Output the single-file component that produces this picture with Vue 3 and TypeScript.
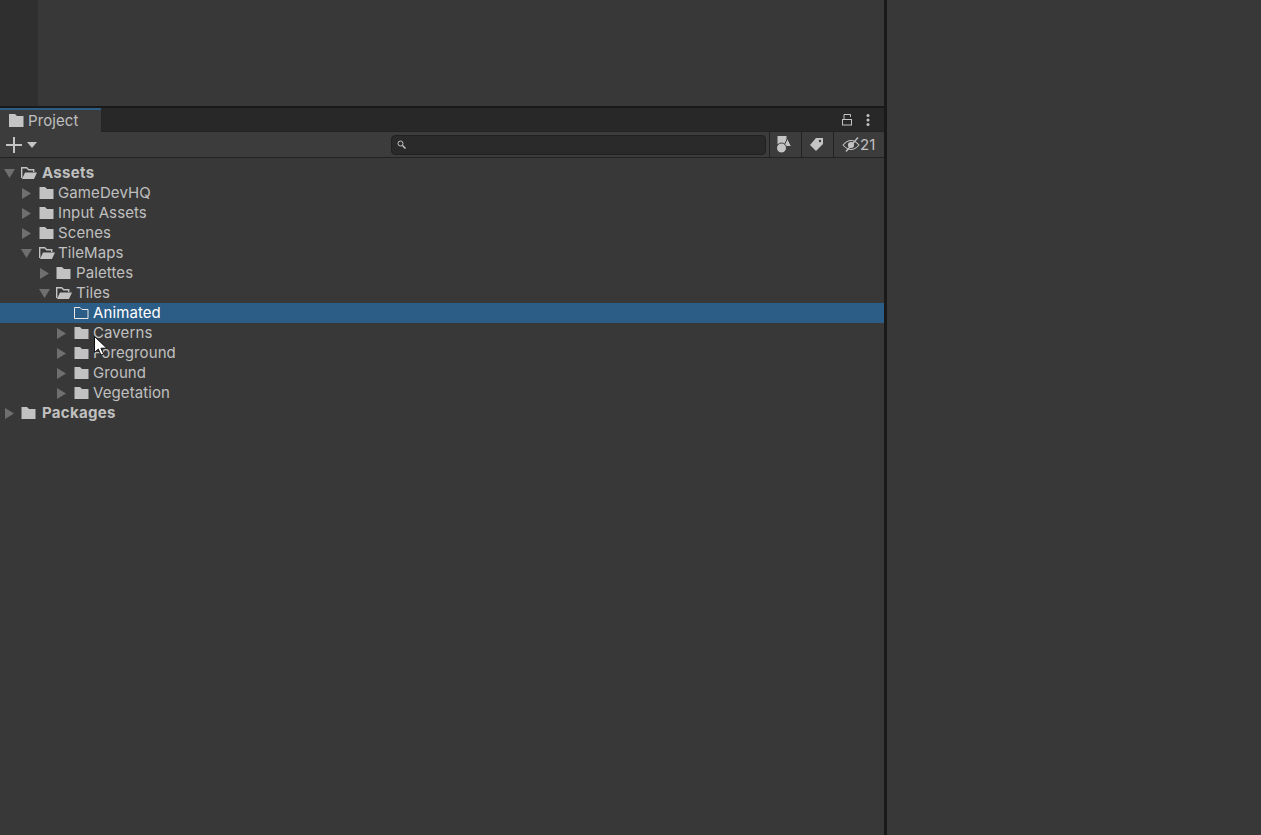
<script setup lang="ts">
interface Row { label: string; level: number; arrow: 'none' | 'open' | 'closed'; folder: 'open' | 'closed' | 'outline'; bold?: boolean; selected?: boolean }
const rows: Row[] = [
  { label: 'Assets', level: 0, arrow: 'open', folder: 'open', bold: true },
  { label: 'GameDevHQ', level: 1, arrow: 'closed', folder: 'closed' },
  { label: 'Input Assets', level: 1, arrow: 'closed', folder: 'closed' },
  { label: 'Scenes', level: 1, arrow: 'closed', folder: 'closed' },
  { label: 'TileMaps', level: 1, arrow: 'open', folder: 'open' },
  { label: 'Palettes', level: 2, arrow: 'closed', folder: 'closed' },
  { label: 'Tiles', level: 2, arrow: 'open', folder: 'open' },
  { label: 'Animated', level: 3, arrow: 'none', folder: 'outline', selected: true },
  { label: 'Caverns', level: 3, arrow: 'closed', folder: 'closed' },
  { label: 'Foreground', level: 3, arrow: 'closed', folder: 'closed' },
  { label: 'Ground', level: 3, arrow: 'closed', folder: 'closed' },
  { label: 'Vegetation', level: 3, arrow: 'closed', folder: 'closed' },
  { label: 'Packages', level: 0, arrow: 'closed', folder: 'closed', bold: true },
]
const indent = (l: number) => ({ paddingLeft: `${[5, 22, 40, 57][l]}px` })
const arrowBox = (l: number) => ({ width: `${[16, 17, 16, 17][l]}px` })
</script>

<template>
  <div class="page">
    <div class="left">
      <div class="scene"><div class="strip"></div></div>
      <div class="project">
        <div class="tabbar">
          <div class="tab">
            <svg class="tabicon" width="15" height="13" viewBox="0 0 15 13"><path d="M0 0h6l2 2h6.500v11H0z" fill="#c4c4c4"/></svg>
            <span>Project</span>
          </div>
          <div class="tabtools">
            <svg width="10" height="13" viewBox="0 0 10 13" fill="none" stroke="#c4c4c4" stroke-width="1"><rect x="0.5" y="6.5" width="9" height="5.5"/><path d="M2 6V1.500h6.500V4"/></svg>
            <svg width="4" height="12" viewBox="0 0 4 12" fill="#c4c4c4"><circle cx="2" cy="1.500" r="1.500"/><circle cx="2" cy="6" r="1.500"/><circle cx="2" cy="10.500" r="1.500"/></svg>
          </div>
        </div>
        <div class="toolbar">
          <div class="add">
            <svg width="16" height="16" viewBox="0 0 16 16"><path d="M7 0h2v7h7v2H9v7H7V9H0V7h7z" fill="#c4c4c4"/></svg>
            <svg width="10" height="6" viewBox="0 0 10 6"><path d="M0 0h10L5 6z" fill="#c4c4c4"/></svg>
          </div>
          <div class="search">
            <svg width="9" height="9" viewBox="0 0 9 9" fill="none" stroke="#c4c4c4"><circle cx="3.500" cy="3.500" r="2.500"/><path d="M5.500 5.500L8.500 8.500" stroke-width="1.500"/></svg>
          </div>
          <div class="tools">
            <div class="tool t1">
              <svg width="15" height="17" viewBox="0 0 15 17" fill="#c4c4c4" stroke="#3c3c3c" stroke-width="1"><rect x="0.500" y="0" width="9" height="8" stroke="none"/><path d="M10.500 2.500L14.500 10.500H6.500z"/><circle cx="4.500" cy="12" r="5"/></svg>
            </div>
            <div class="tool t2">
              <svg width="13" height="13" viewBox="0 0 13 13"><path d="M6 0h7v6l-7 7-6-6z" fill="#c4c4c4"/><circle cx="10" cy="3" r="1.200" fill="#3c3c3c"/></svg>
            </div>
            <div class="tool t3">
              <svg width="18" height="15" viewBox="0 0 18 15" fill="none" stroke="#c4c4c4" stroke-width="1.100"><path d="M1 8C4 4.500 7 3.500 9 3.500s5 1 8 4.500c-3 3.500-6 4.500-8 4.500S4 11.500 1 8z"/><circle cx="9" cy="8" r="2.500" fill="#c4c4c4"/><path d="M4 14.500L16 0.500" stroke-width="1.300"/></svg>
              <span>21</span>
            </div>
          </div>
        </div>
        <div class="tree">
          <div v-for="r in rows" :key="r.label" class="row" :class="{ selected: r.selected, bold: r.bold, deep: r.level === 2 }" :style="indent(r.level)">
            <span class="arrow" :style="arrowBox(r.level)">
              <svg v-if="r.arrow === 'closed'" width="9" height="11" viewBox="0 0 9 11"><path d="M0 0l9 5.500L0 11z" fill="#6f6f6f"/></svg>
              <svg v-else-if="r.arrow === 'open'" class="down" width="11" height="9" viewBox="0 0 11 9"><path d="M0 0h11L5.500 9z" fill="#6f6f6f"/></svg>
            </span>
            <svg class="folder" width="16" height="14" viewBox="0 0 16 14">
              <path v-if="r.folder === 'closed'" d="M0.500 1h5.500l2 2h6.500v10H0.500z" fill="#c2c2c2"/>
              <path v-else-if="r.folder === 'outline'" d="M0.500 1.500h5.500l2 2h6v9H0.500z" fill="none" stroke="#e8e8e8"/>
              <g v-else>
                <path d="M0.700 12V1.700h5l2 2h5V6" fill="none" stroke="#c2c2c2" stroke-width="1.400"/>
                <path d="M4 6.500H16L13 13H1z" fill="#c2c2c2"/>
              </g>
            </svg>
            <span class="label">{{ r.label }}</span>
          </div>
        </div>
        <svg class="cursor" width="15" height="21" viewBox="0 0 15 21"><path d="M0.500 0.500v16l3.800-3.400 2.700 6 2.600-1.100-2.700-5.800H12.800z" fill="#fff" stroke="#111" stroke-width="1"/></svg>
      </div>
    </div>
    <div class="divider"></div>
    <div class="right"></div>
  </div>
</template>

<style scoped>
.page { display: flex; width: 1261px; height: 835px; overflow: hidden; background: #383838; font-family: Inter, "Noto Sans", sans-serif; color: #c0c0c0; }
.left { width: 884px; display: flex; flex-direction: column; }
.scene { height: 106px; background: #383838; }
.strip { width: 38px; height: 100%; background: #2f2f2f; }
.divider { width: 3px; background: #191919; }
.right { flex: 1; background: #383838; }
.project { flex: 1; position: relative; border-top: 2px solid #191919; }
.tabbar { height: 23px; display: flex; justify-content: space-between; background: #282828; }
.tab { position: relative; z-index: 1; width: 101px; height: 24px; box-sizing: border-box; border-top: 2px solid #2c5d87; padding-bottom: 1px; background: #3c3c3c; display: flex; align-items: center; gap: 4px; padding-left: 9px; font-size: 15px; letter-spacing: 0.1px; color: #c0c0c0; }
.tabtools { display: flex; align-items: center; gap: 14px; padding-right: 14px; }
.toolbar { height: 27px; box-sizing: border-box; display: flex; align-items: center; border-top: 1px solid #232323; border-bottom: 1px solid #232323; background: #3c3c3c; }
.add { display: flex; align-items: center; gap: 5px; padding-left: 6px; width: 391px; box-sizing: border-box; }
.search { width: 375px; height: 20px; box-sizing: border-box; background: #2a2a2a; border: 1px solid #212121; border-radius: 4px; display: flex; align-items: center; padding-left: 5px; }
.tools { display: flex; height: 100%; margin-left: 3px; }
.tool { display: flex; align-items: center; justify-content: center; border-left: 1px solid #232323; height: 25px; box-sizing: border-box; }
.t1 { width: 32px; padding-right: 2px; }
.t2 { width: 32px; padding-right: 2px; }
.t3 { width: 51px; gap: 0; font-size: 15px; letter-spacing: 0.1px; justify-content: flex-start; padding-left: 8px; }
.tree { padding-top: 5px; }
.row { height: 20px; display: flex; align-items: center; font-size: 15px; letter-spacing: 0.1px; color: #c0c0c0; }
.row.bold { font-weight: 700; letter-spacing: 0.3px; }
.row.selected { background: #2c5d87; color: #fff; }
.label { padding-bottom: 2px; }
.arrow { height: 20px; display: flex; align-items: center; flex: none; }
.down { margin-left: -1px; }
.folder { margin-right: 3px; flex: none; }
.deep .folder { margin-right: 4px; }
.bold .folder { margin-right: 5px; }
.cursor { position: absolute; left: 94px; top: 228px; }
</style>
